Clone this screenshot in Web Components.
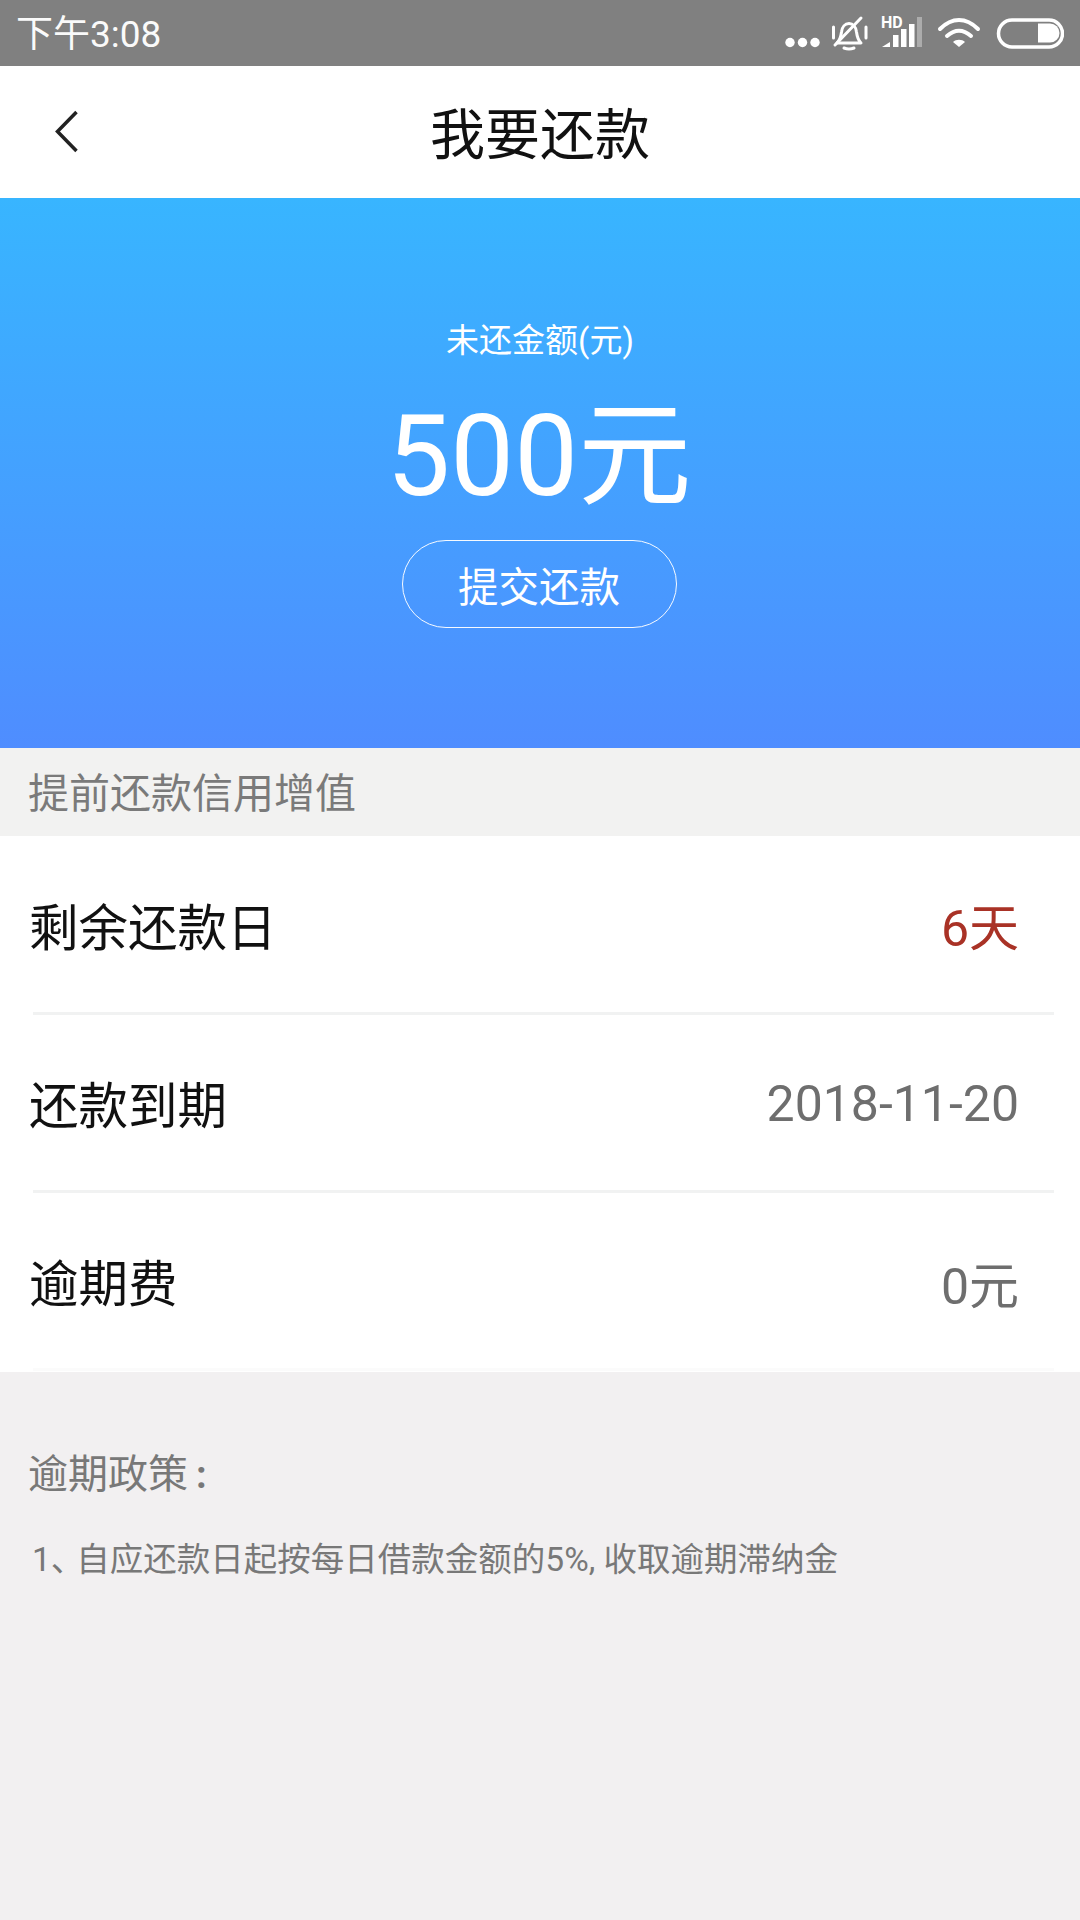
<!DOCTYPE html>
<html lang="zh-CN"><head><meta charset="utf-8">
<style>
html,body{margin:0;padding:0}
body{width:1080px;height:1920px;overflow:hidden;background:#f2f0f1;font-family:Roboto,"Noto Sans CJK SC",sans-serif;}
</style></head><body>
<pay-status></pay-status>
<pay-nav>我要还款</pay-nav>
<pay-hero label="未还金额(元)" amount="500元" action="提交还款"></pay-hero>
<pay-subhead>提前还款信用增值</pay-subhead>
<pay-list>
<pay-row label="剩余还款日" value="6天" tone="#a93226"></pay-row>
<pay-row label="还款到期" value="2018-11-20" digits></pay-row>
<pay-row label="逾期费" value="0元" last digits></pay-row>
</pay-list>
<pay-policy title="逾期政策">1<span style="letter-spacing:-8px">、</span>自应还款日起按每日借款金额的5%, 收取逾期滞纳金</pay-policy>
<script>
function def(name, html){
  customElements.define(name, class extends HTMLElement{
    connectedCallback(){
      if(this.shadowRoot) return;
      const r=this.attachShadow({mode:'open'});
      r.innerHTML=html(this);
    }
  });
}
const FONT='Roboto,"Noto Sans CJK SC",sans-serif';
def('pay-status',()=>`<style>
:host{display:flex;align-items:center;justify-content:space-between;height:66px;background:#808080;color:#fff;padding:0 16px;box-sizing:border-box;font-family:${FONT}}
.t{font-size:37px;line-height:66px;opacity:.96;padding-top:4px}
svg{display:block}
</style><span class="t">下午3:08</span>
<svg width="304" height="66" viewBox="760 0 304 66">
<g fill="#fff"><circle cx="790" cy="42.500" r="4.700"/><circle cx="802.500" cy="42.500" r="4.700"/><circle cx="815" cy="42.500" r="4.700"/></g>
<g fill="none" stroke="#fff" stroke-width="3" stroke-linecap="round" stroke-linejoin="round">
<path d="M837 43c3-3 4-7 4.500-11 .5-5 3.500-8.500 7.500-8.500s7 3.500 7.500 8.500c.5 4 1.500 8 4.500 11z"/>
<path d="M835 45 861 18"/>
<path d="M833.500 27v11M866 27v11"/>
<path d="M844 48c3 1.200 7 1.200 10 0"/>
</g>
<text x="881" y="28" font-family="Roboto,sans-serif" font-size="16" font-weight="700" fill="#fff">HD</text>
<g fill="#fff"><path d="M882 47l8-5v5z"/><rect x="893" y="35" width="5.500" height="12"/><rect x="901" y="29" width="5.500" height="18"/><rect x="909" y="24" width="5.500" height="23"/></g>
<rect x="917" y="17" width="5" height="30" fill="#fff" opacity=".35"/>
<g fill="none" stroke="#fff" stroke-width="4" stroke-linecap="round"><path d="M940 29c12-12 26-12 38 0"/><path d="M947 36c8-7 16-7 24 0"/></g>
<path d="M953 42c3-3 9-3 12 0l-6 5z" fill="#fff"/>
<rect x="998.500" y="20" width="64" height="27" rx="13.500" fill="none" stroke="#fff" stroke-width="3.500"/>
<path d="M1038 23.500h12a9.500 9.500 0 0 1 0 19h-12z" fill="#fff"/>
</svg>`);
def('pay-nav',()=>`<style>
:host{display:flex;align-items:center;justify-content:center;position:relative;height:132px;background:#fff;color:#111;font-family:${FONT}}
.b{position:absolute;left:50px;top:43px;display:block}
.t{font-size:55px;line-height:132px;padding-top:5px}
</style><svg class="b" width="32" height="46" viewBox="0 0 32 46"><path d="M26.500 3 7.500 22.500 26.500 42" fill="none" stroke="#222" stroke-width="3.500"/></svg><span class="t"><slot></slot></span>`);
def('pay-hero',h=>`<style>
:host{display:flex;flex-direction:column;align-items:center;box-sizing:border-box;height:550px;padding-top:123px;color:#fff;background:linear-gradient(180deg,#38b5ff 0%,#4f8dff 100%);font-family:${FONT}}
.l{font-size:33px;line-height:40px}
.a{font-size:113.500px;line-height:130px;margin-top:31px;margin-right:2px}
.btn{box-sizing:border-box;width:275px;height:88px;margin:18px 2px 0 0;border:1.500px solid rgba(255,255,255,.95);border-radius:44px;display:flex;align-items:center;justify-content:center;font-size:40.500px}
</style><div class="l">${h.getAttribute('label')}</div><div class="a">${h.getAttribute('amount')}</div><div class="btn">${h.getAttribute('action')}</div>`);
def('pay-subhead',()=>`<style>
:host{display:block;box-sizing:border-box;height:88px;padding:2px 0 0 28px;background:#f2f2f1;color:#7a7a7a;font-size:41px;line-height:88px;font-family:${FONT}}
</style><slot></slot>`);
def('pay-list',()=>`<style>:host{display:block;box-sizing:border-box;background:#fff;height:536px;padding-top:1px;overflow:hidden}</style><slot></slot>`);
def('pay-row',h=>`<style>
:host{display:block;padding-left:33px;height:178px}
.r{box-sizing:border-box;height:178px;display:flex;align-items:center;justify-content:space-between;padding:0 35px 0 0;margin-right:26px;border-bottom:3px solid ${h.hasAttribute('last')?'#fbfbfb':'#f1f2f2'};font-family:${FONT}}
.l{font-size:49.500px;color:#111;margin:0 0 0 -4px}
.v{font-size:50px;color:${h.getAttribute('tone')||'#6e6e6e'};padding-top:${h.hasAttribute('digits')?'4':'0'}px;margin-top:-2px}
</style><div class="r"><span class="l">${h.getAttribute('label')}</span><span class="v">${h.getAttribute('value')}</span></div>`);
def('pay-policy',h=>`<style>
:host{display:block;padding:71px 28px 0;color:#787878;font-family:${FONT}}
.t{font-size:40px;line-height:64px}
.c{font-family:Roboto,sans-serif;font-weight:700;font-size:38px;margin-left:8px}
.b{font-size:33.500px;line-height:48px;margin-top:29px;padding-left:4px;white-space:nowrap}
</style><div class="t">${h.getAttribute('title')}<span class="c">:</span></div><div class="b"><slot></slot></div>`);
</script>
</body></html>
